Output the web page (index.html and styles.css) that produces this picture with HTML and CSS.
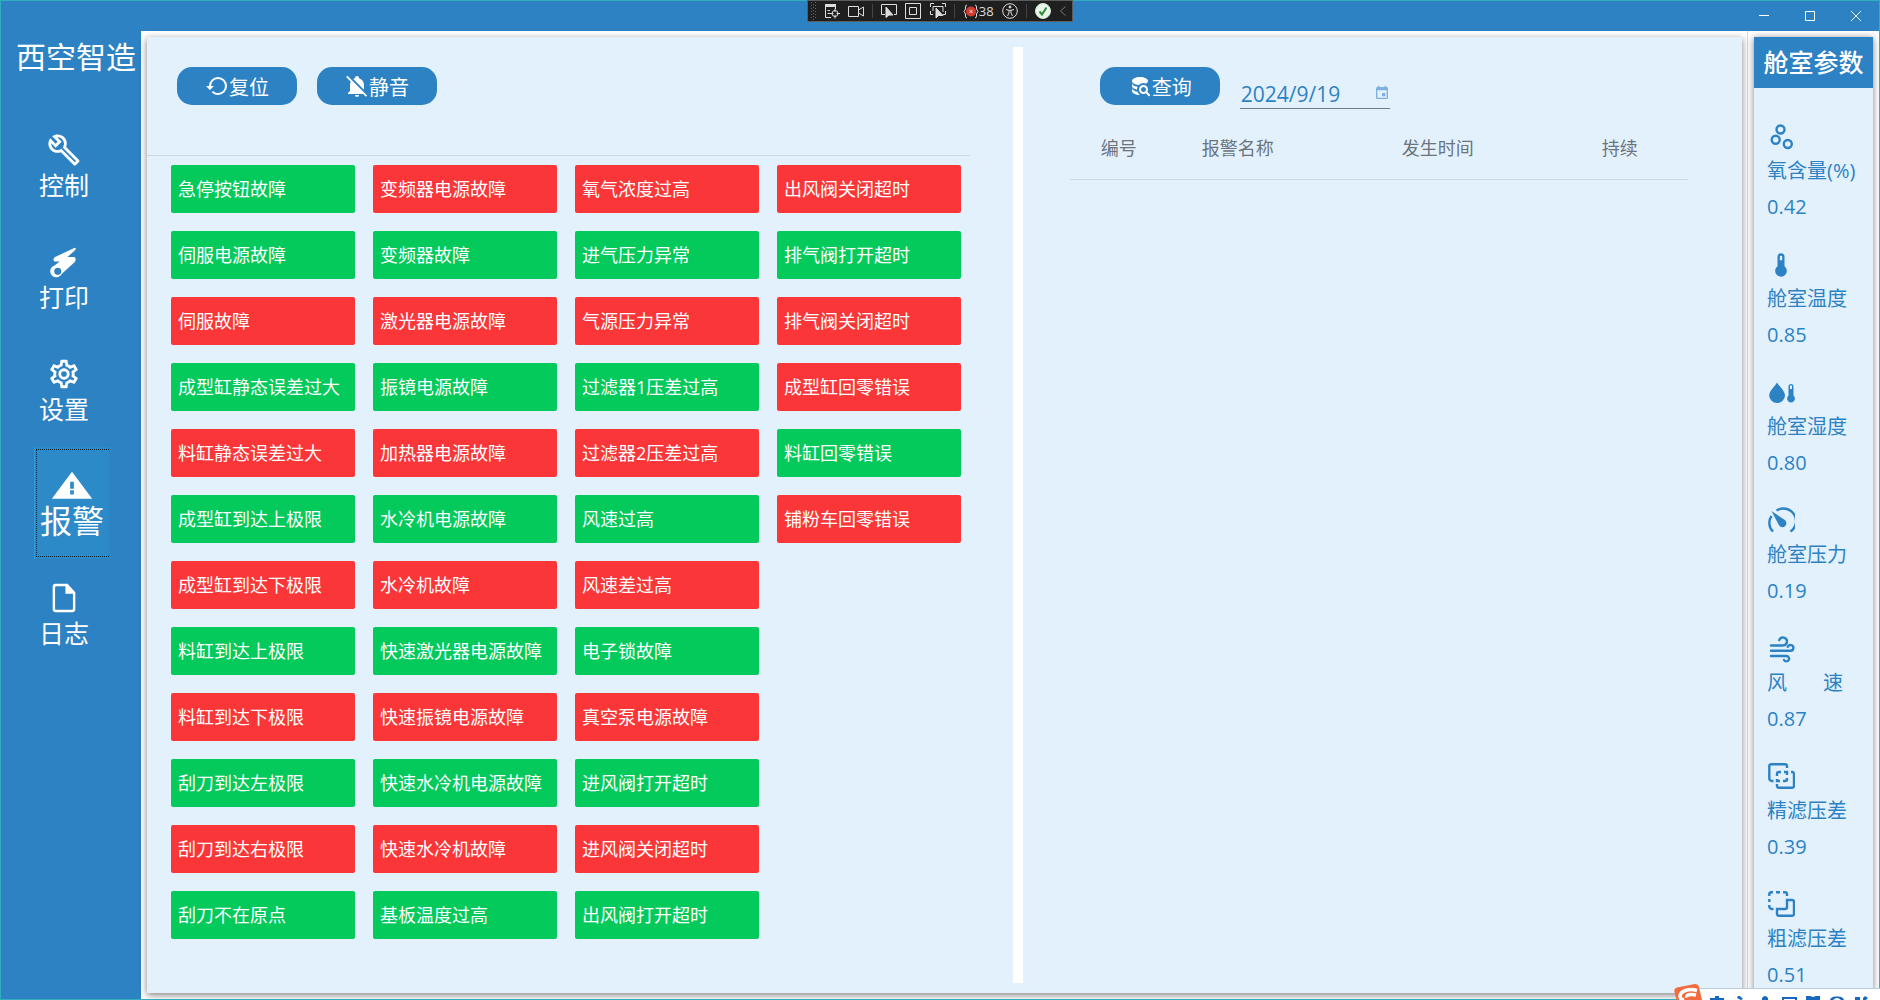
FILE: index.html
```html
<!DOCTYPE html>
<html lang="zh-CN">
<head>
<meta charset="utf-8">
<title>西空智造</title>
<link rel="stylesheet" href="styles.css">
</head>
<body>
<div class="window">
  <header class="titlebar">
    <div class="caption-buttons">
      <button type="button" aria-label="最小化"><svg width="12" height="12" viewBox="0 0 12 12"><path d="M1 5.500h10"/></svg></button>
      <button type="button" aria-label="最大化"><svg width="12" height="12" viewBox="0 0 12 12"><path d="M1.500 1.500h9v9h-9z"/></svg></button>
      <button type="button" aria-label="关闭"><svg width="12" height="12" viewBox="0 0 12 12"><path d="M1 1l10 10M11 1L1 11"/></svg></button>
    </div>
  </header>

  <div class="body">
    <aside class="sidebar">
      <h1 class="brand">西空智造</h1>
      <nav class="nav">
        <button type="button" class="nav-item">
          <svg class="nav-icon" viewBox="0 0 24 24"><path d="M22.61,19L13.53,9.91C14.46,7.57 14,4.81 12.09,2.91C9.79,0.61 6.21,0.4 3.66,2.26L7.5,6.11L6.08,7.52L2.25,3.69C0.39,6.23 0.6,9.82 2.9,12.11C4.76,13.97 7.47,14.46 9.79,13.59L18.9,22.7C19.29,23.09 19.92,23.09 20.31,22.7L22.61,20.4C23,20 23,19.39 22.61,19M19.61,20.59L10.15,11.13C9.54,11.58 8.86,11.85 8.15,11.95C6.79,12.15 5.36,11.74 4.32,10.7C3.37,9.76 2.93,8.5 3,7.26L6.09,10.35L10.33,6.11L7.24,3C8.5,2.95 9.73,3.39 10.68,4.33C11.76,5.41 12.17,6.9 11.92,8.29C11.8,9 11.5,9.66 11.04,10.25L20.5,19.7L19.61,20.59Z"/></svg>
          <span>控制</span>
        </button>
        <button type="button" class="nav-item">
          <svg class="nav-icon" viewBox="0 0 24 24"><path fill-rule="evenodd" d="M19.200 2.100Q20.600 1.700 20.100 3.300L14.500 8.500H19.300Q20.800 9 19.800 11.800L10.500 20.300A4.300 4.300 0 1 1 5.300 14.400L9 11.700H5.300Q3.900 10.800 5.300 8.700ZM7.600 16.100A2.500 2.500 0 1 0 7.600 21.100A2.500 2.500 0 1 0 7.600 16.100Z"/></svg>
          <span>打印</span>
        </button>
        <button type="button" class="nav-item">
          <svg class="nav-icon" viewBox="0 0 24 24"><path d="M12,8A4,4 0 0,1 16,12A4,4 0 0,1 12,16A4,4 0 0,1 8,12A4,4 0 0,1 12,8M12,10A2,2 0 0,0 10,12A2,2 0 0,0 12,14A2,2 0 0,0 14,12A2,2 0 0,0 12,10M10,22C9.75,22 9.54,21.82 9.5,21.58L9.13,18.93C8.5,18.68 7.96,18.34 7.44,17.94L4.95,18.95C4.73,19.03 4.46,18.95 4.34,18.73L2.34,15.27C2.21,15.05 2.27,14.78 2.46,14.63L4.57,12.97L4.5,12L4.57,11L2.46,9.37C2.27,9.22 2.21,8.95 2.34,8.73L4.34,5.27C4.46,5.05 4.73,4.96 4.95,5.05L7.44,6.05C7.96,5.66 8.5,5.32 9.13,5.07L9.5,2.42C9.54,2.18 9.75,2 10,2H14C14.25,2 14.46,2.18 14.5,2.42L14.87,5.07C15.5,5.32 16.04,5.66 16.56,6.05L19.05,5.05C19.27,4.96 19.54,5.05 19.66,5.27L21.66,8.73C21.79,8.95 21.73,9.22 21.54,9.37L19.43,11L19.5,12L19.43,13L21.54,14.63C21.73,14.78 21.79,15.05 21.66,15.27L19.66,18.73C19.54,18.95 19.27,19.04 19.05,18.95L16.56,17.95C16.04,18.34 15.5,18.68 14.87,18.93L14.5,21.58C14.46,21.82 14.25,22 14,22H10M11.25,4L10.88,6.61C9.68,6.86 8.62,7.5 7.85,8.39L5.44,7.35L4.69,8.65L6.8,10.2C6.4,11.37 6.4,12.64 6.8,13.8L4.68,15.36L5.43,16.66L7.86,15.62C8.63,16.5 9.68,17.14 10.87,17.38L11.24,20H12.76L13.13,17.39C14.32,17.14 15.37,16.5 16.14,15.62L18.57,16.66L19.32,15.36L17.2,13.81C17.6,12.64 17.6,11.37 17.2,10.2L19.31,8.65L18.56,7.35L16.15,8.39C15.38,7.5 14.32,6.86 13.12,6.62L12.75,4H11.25Z"/></svg>
          <span>设置</span>
        </button>
        <button type="button" class="nav-item nav-item-active" aria-current="page">
          <svg class="nav-icon nav-icon-wide" viewBox="0 0 24 24" preserveAspectRatio="none"><path d="M13 14H11V9H13M13 18H11V15H13M1 21H23L12 2L1 21Z"/></svg>
          <span>报警</span>
        </button>
        <button type="button" class="nav-item">
          <svg class="nav-icon" viewBox="0 0 24 24"><path fill-rule="evenodd" d="M6 2H14.500L20 8V20A2 2 0 0 1 18 22H6A2 2 0 0 1 4 20V4A2 2 0 0 1 6 2ZM6.500 3.700A.8.800 0 0 0 5.700 4.500V19.500A.8.800 0 0 0 6.500 20.300H17.500A.8.800 0 0 0 18.300 19.500V9H13V3.700Z"/></svg>
          <span>日志</span>
        </button>
      </nav>
    </aside>

    <main class="content">
      <div class="card">
        <section class="pane alarms">
          <div class="toolbar">
            <button type="button" class="btn"><svg viewBox="0 0 24 24"><path d="M13,3A9,9 0 0,0 4,12H1L4.89,15.89L4.96,16.03L9,12H6A7,7 0 0,1 13,5A7,7 0 0,1 20,12A7,7 0 0,1 13,19C11.07,19 9.32,18.21 8.06,16.94L6.64,18.36C8.27,20 10.5,21 13,21A9,9 0 0,0 22,12A9,9 0 0,0 13,3Z"/></svg>复位</button>
            <button type="button" class="btn"><svg viewBox="0 0 24 24"><path d="M20.84,22.73L18.11,20H3V19L5,17V11C5,9.86 5.29,8.73 5.83,7.72L1.11,3L2.39,1.73L22.11,21.46L20.84,22.73M19,15.8V11C19,7.9 16.97,5.17 14,4.29C14,4.19 14,4.1 14,4A2,2 0 0,0 12,2A2,2 0 0,0 10,4C10,4.1 10,4.19 10,4.29C9.39,4.47 8.8,4.74 8.26,5.09L19,15.8M12,23A2,2 0 0,0 14,21H10A2,2 0 0,0 12,23Z"/></svg>静音</button>
          </div>
          <ul class="tiles">
            <li class="tile ok">急停按钮故障</li>
            <li class="tile ok">伺服电源故障</li>
            <li class="tile fault">伺服故障</li>
            <li class="tile ok">成型缸静态误差过大</li>
            <li class="tile fault">料缸静态误差过大</li>
            <li class="tile ok">成型缸到达上极限</li>
            <li class="tile fault">成型缸到达下极限</li>
            <li class="tile ok">料缸到达上极限</li>
            <li class="tile fault">料缸到达下极限</li>
            <li class="tile ok">刮刀到达左极限</li>
            <li class="tile fault">刮刀到达右极限</li>
            <li class="tile ok">刮刀不在原点</li>
            <li class="tile fault">变频器电源故障</li>
            <li class="tile ok">变频器故障</li>
            <li class="tile fault">激光器电源故障</li>
            <li class="tile ok">振镜电源故障</li>
            <li class="tile fault">加热器电源故障</li>
            <li class="tile ok">水冷机电源故障</li>
            <li class="tile fault">水冷机故障</li>
            <li class="tile ok">快速激光器电源故障</li>
            <li class="tile fault">快速振镜电源故障</li>
            <li class="tile ok">快速水冷机电源故障</li>
            <li class="tile fault">快速水冷机故障</li>
            <li class="tile ok">基板温度过高</li>
            <li class="tile fault">氧气浓度过高</li>
            <li class="tile ok">进气压力异常</li>
            <li class="tile fault">气源压力异常</li>
            <li class="tile ok">过滤器1压差过高</li>
            <li class="tile fault">过滤器2压差过高</li>
            <li class="tile ok">风速过高</li>
            <li class="tile fault">风速差过高</li>
            <li class="tile ok">电子锁故障</li>
            <li class="tile fault">真空泵电源故障</li>
            <li class="tile ok">进风阀打开超时</li>
            <li class="tile fault">进风阀关闭超时</li>
            <li class="tile ok">出风阀打开超时</li>
            <li class="tile fault">出风阀关闭超时</li>
            <li class="tile ok">排气阀打开超时</li>
            <li class="tile fault">排气阀关闭超时</li>
            <li class="tile fault">成型缸回零错误</li>
            <li class="tile ok">料缸回零错误</li>
            <li class="tile fault">铺粉车回零错误</li>
          </ul>
        </section>

        <div class="splitter"></div>

        <section class="pane history">
          <div class="query">
            <button type="button" class="btn"><svg viewBox="0 0 24 24"><path d="M18.68,12.32C16.92,10.56 14.07,10.57 12.32,12.33C10.56,14.09 10.56,16.94 12.32,18.69C13.81,20.17 16.11,20.43 17.89,19.32L21,22.39L22.39,21L19.3,17.89C20.43,16.12 20.17,13.8 18.68,12.32M17.27,17.27C16.29,18.25 14.71,18.24 13.73,17.27C12.76,16.29 12.76,14.71 13.74,13.73C14.71,12.76 16.29,12.76 17.27,13.73C18.24,14.71 18.24,16.29 17.27,17.27M10.9,20.1C10.25,19.44 9.74,18.65 9.42,17.78C6.27,17.25 4,15.76 4,14V17C4,19.21 7.58,21 12,21V21C11.6,20.74 11.23,20.44 10.9,20.1M4,9V12C4,13.68 6.07,15.12 9,15.7C9,15.63 9,15.57 9,15.5C9,14.57 9.2,13.65 9.58,12.81C6.34,12.3 4,10.79 4,9M12,3C7.58,3 4,4.79 4,7C4,9 7,10.68 10.85,11H10.9C12.1,9.74 13.76,9 15.5,9C16.41,9 17.31,9.19 18.14,9.56C19.17,9.09 19.87,8.12 20,7C20,4.79 16.42,3 12,3Z"/></svg>查询</button>
            <div class="date">
              <input type="text" value="2024/9/19" aria-label="日期">
              <button type="button" aria-label="选择日期"><svg width="16" height="16" viewBox="0 0 24 24"><path d="M19 19H5V8H19M16 1V3H8V1H6V3H5A2 2 0 0 0 3 5V19A2 2 0 0 0 5 21H19A2 2 0 0 0 21 19V5A2 2 0 0 0 19 3H18V1M17 12H12V17H17V12Z"/></svg></button>
            </div>
          </div>
          <table class="records">
            <colgroup><col class="col-id"><col class="col-name"><col class="col-time"><col></colgroup>
            <thead><tr><th scope="col">编号</th><th scope="col">报警名称</th><th scope="col">发生时间</th><th scope="col">持续</th></tr></thead>
            <tbody></tbody>
          </table>
        </section>
      </div>
    </main>

    <aside class="params">
      <div class="params-card">
        <h2>舱室参数</h2>
        <dl>
          <div class="param">
            <svg viewBox="0 0 28 28" class="line"><circle cx="13.500" cy="6.500" r="4"/><circle cx="8.700" cy="16.700" r="4"/><circle cx="20.800" cy="21" r="4"/></svg>
            <dt>氧含量(%)</dt><dd>0.42</dd>
          </div>
          <div class="param">
            <svg viewBox="0 0 24 24"><path d="M15 13V5A3 3 0 0 0 9 5V13A5 5 0 1 0 15 13M12 4A1 1 0 0 1 13 5V8H11V5A1 1 0 0 1 12 4Z"/></svg>
            <dt>舱室温度</dt><dd>0.85</dd>
          </div>
          <div class="param">
            <svg viewBox="0 0 28 28"><path d="M10 3.500C12 7 18 12 18 16.500A7.900 7.500 0 0 1 2.200 16.500C2.200 12 8 7 10 3.500Z"/><path fill-rule="evenodd" d="M26.500 16.500V7.500A2.500 2.500 0 0 0 21.500 7.500V16.500A3.900 3.900 0 1 0 26.500 16.500ZM24 6.200A1 1 0 0 1 25 7.200V10H23V7.200A1 1 0 0 1 24 6.200Z"/></svg>
            <dt>舱室湿度</dt><dd>0.80</dd>
          </div>
          <div class="param">
            <svg viewBox="0 0 28 28"><path d="M9.500 3.600A12 12 0 0 1 23.500 24.500M6 24.500A12 12 0 0 1 4.500 9" fill="none" stroke="currentColor" stroke-width="2.400"/><path d="M4.500 4L17.500 12.800A4 4 0 1 1 11.800 18Z"/></svg>
            <dt>舱室压力</dt><dd>0.19</dd>
          </div>
          <div class="param">
            <svg viewBox="0 1 28 28" class="line"><path d="M4 11.500H16A4 4 0 1 0 12.200 6.200M4 16.800H23.500A2.900 2.900 0 1 0 20.800 12.800M4 22H19.500A2.700 2.700 0 1 1 17 26" stroke-linecap="round"/></svg>
            <dt>风<span class="spread"></span>速</dt><dd>0.87</dd>
          </div>
          <div class="param">
            <svg viewBox="0 1 28 28" class="line"><path d="M6.500 19H4.500A2.500 2.500 0 0 1 2.300 17V4A2 2 0 0 1 4.300 2.200H18A2 2 0 0 1 20 4V6M24 10H25.500A2 2 0 0 1 27 12V24A2 2 0 0 1 25 25.800H12A2 2 0 0 1 10 24V22"/><path d="M14 10H12A2 2 0 0 0 10 12V14M17 10H20V13M20 16V17A2 2 0 0 1 18 19H16M13 19H10V17"/></svg>
            <dt>精滤压差</dt><dd>0.39</dd>
          </div>
          <div class="param">
            <svg viewBox="0 1 28 28" class="line"><path d="M6.500 19H4.500A2.500 2.500 0 0 1 2.300 17V15M2.300 12V9M2.300 6V4A2 2 0 0 1 4.300 2.200H6M9 2.200H13M16 2.200H18A2 2 0 0 1 20 4V6M20 10H25A2 2 0 0 1 27 12V24A2 2 0 0 1 25 25.800H12A2 2 0 0 1 10 24V19H18A2 2 0 0 0 20 17Z"/></svg>
            <dt>粗滤压差</dt><dd>0.51</dd>
          </div>
        </dl>
      </div>
    </aside>
  </div>
</div>

<div class="debugbar">
  <svg width="5" height="18" viewBox="0 0 5 18" class="grip"><path d="M.5 0V18M4.500 0V18M2.500 2V18"/></svg>
  <svg width="16" height="16" viewBox="0 0 16 16"><path d="M7 14.500H1.500V4M11.500 4V6M3.500 7.500H6M3.500 10.500H6"/><path d="M1 2.500H12" stroke-width="3"/><circle cx="11" cy="10.500" r="3"/><path d="M11 5.500V9M11 12V15.500M6 10.500H9.500M12.500 10.500H16"/></svg>
  <svg width="16" height="16" viewBox="0 0 16 16"><path d="M.5 3.500H10.500V13.500H.5ZM10.500 7L15.500 4V13L10.500 10"/></svg>
  <i></i>
  <svg width="16" height="16" viewBox="0 0 16 16"><path d="M4 11.500H.5V1.500H15.500V11.500H13"/><path d="M5 4V14.500L8 12L12 12Z" fill="#ddd"/></svg>
  <svg width="16" height="16" viewBox="0 0 16 16"><path d="M.5 .5H15.500V15.500H.5ZM4.500 4.500H11.500V11.500H4.500Z"/></svg>
  <svg width="16" height="16" viewBox="0 0 16 16"><path d="M.5 4V.5H4M12 .5H15.500V4M.5 8V11.500H3M15.500 8V11.500H13M3 3.500H13V9M3 3.500V8"/><path d="M6 5V15L8.500 12.500L13 12.500Z" fill="#ddd"/></svg>
  <i></i>
  <span class="hot"><svg width="16" height="16" viewBox="0 0 16 16"><circle cx="8" cy="8.500" r="5" fill="#d93a2f" stroke="none"/><path d="M4 2Q2.500 2 2.500 4V6L1 8.500L2.500 11V13Q2.500 15 4 15M12 2Q13.500 2 13.500 4V6L15 8.500L13.500 11V13Q13.500 15 12 15M6.500 7L9.500 10M9.500 7L6.500 10"/></svg>38</span>
  <svg width="16" height="16" viewBox="0 0 16 16"><circle cx="8" cy="8" r="7.300"/><circle cx="8" cy="4" r="1" fill="#ddd"/><path d="M4 6.500L7 7.300H9L12 6.500M7 7.300V10L5.500 13M9 7.300V10L10.500 13"/></svg>
  <i></i>
  <svg width="16" height="16" viewBox="0 0 16 16"><circle cx="8" cy="8" r="7.500" fill="#eaf5ea" stroke="#cfe8cf"/><path d="M4.500 8.500L7 11.500L11.500 4.500" stroke="#2e8b3a" stroke-width="2"/></svg>
  <svg width="8" height="16" viewBox="0 0 8 16"><path d="M6.500 3.500L1.500 8L6.500 12.500" stroke="#777"/></svg>
</div>

<div class="ime">
  <svg class="ime-logo" width="32" height="16" viewBox="0 0 32 16"><path d="M3.500 8Q2.500 4.500 6 3.500L24 0Q27 0 28 3L31 16H5.500Z" fill="#f26a3d"/><path d="M26 6.500C18 4 9 7 9 12.500C9 15 11 15.500 13 16M25 11C19 9.500 15 11 16 13.500" fill="none" stroke="#fff" stroke-width="3.500"/></svg>
  <svg class="ime-tools" width="170" height="4" viewBox="0 0 170 4"><path d="M0 2H5V0H9V2H14V4H0ZM28 0H30L33 3L31 4L27 2ZM52 4V2Q55-2 58 2V4ZM72 4V1H87V4H85V3H74V4ZM96 4V0H100L103 1L106 0H110V4ZM120 4Q121 0 127 .500Q133 0 134 4H131Q127 0 123 4ZM145 1H150V4H145ZM153 2L155 0L158 2L156 4H153Z"/></svg>
</div>
</body>
</html>
```
FILE: styles.css
```css
:root {
  --blue: #2d82c4;
  --pale: #e3f1fd;
  --line: #cbdae7;
  --green: #03ca5b;
  --red: #fb3639;
}

* { box-sizing: border-box; }

body {
  margin: 0;
  font-family: "Open Sans", "Noto Sans CJK SC", sans-serif;
  font-size: 18px;
  color: var(--blue);
  background: #fff;
}

button {
  border: 0;
  padding: 0;
  background: none;
  font: inherit;
  color: inherit;
}

svg { display: block; fill: currentColor; flex: none; }
h1, h2, dl, dd, ul { margin: 0; padding: 0; font-weight: 400; }

.window {
  height: 100vh;
  display: flex;
  flex-direction: column;
  overflow: hidden;
  border: 1px solid #30aebf;
}

.titlebar {
  flex: 0 0 30px;
  display: flex;
  justify-content: flex-end;
  background: var(--blue);
}

.caption-buttons { display: flex; }
.caption-buttons button {
  width: 46px;
  display: grid;
  place-items: center;
}
.caption-buttons svg { fill: none; stroke: #fff; }

.body { flex: 1; min-height: 0; display: flex; }

.sidebar {
  flex: 0 0 140px;
  background: var(--blue);
  color: #fff;
}

.brand {
  padding: 4px 0 0 15px;
  font-size: 30px;
  line-height: 44px;
  white-space: nowrap;
}

.nav {
  padding: 32px 0 0 33px;
  display: flex;
  flex-direction: column;
  align-items: flex-start;
}

.nav-item {
  padding: 22px 5px 20px;
  display: flex;
  flex-direction: column;
  align-items: center;
  font-size: 25px;
  line-height: 36px;
}
.nav-icon { width: 34px; height: 34px; }
.nav-icon-wide { width: 44px; }

.nav-item-active {
  position: relative;
  background: #2d8ac9;
  border-left: 1px solid #2c98d4;
  font-size: 32px;
}
/* keyboard focus marks, open on the right side */
.nav-item-active::after {
  content: "";
  position: absolute;
  inset: 2px 0 2px 1px;
  border: 1px dotted #0c2436;
  border-right: 0;
}

.content { flex: 1; min-width: 0; padding: 6px 5px 6px 6px; border-right: 1px solid #dcdcdc; }

.card {
  height: 100%;
  display: grid;
  grid-template-columns: 65fr 10px 54fr;
  background: var(--pale);
  box-shadow: 0 2px 7px rgba(0, 0, 0, .5);
}

.pane { min-width: 0; }
.splitter { margin: 10px 0; background: #fff; }

.toolbar {
  height: 119px;
  margin-right: 43px;
  padding: 30px;
  display: flex;
  gap: 20px;
  border-bottom: 1px solid var(--line);
}

.btn {
  width: 120px;
  height: 38px;
  display: flex;
  align-items: center;
  justify-content: center;
  border-radius: 15px;
  background: var(--blue);
  color: #fff;
  font-size: 20px;
}
.btn svg { width: 24px; height: 24px; }

.tiles {
  padding: 9px 24px;
  display: grid;
  grid-template-rows: repeat(12, 48px);
  grid-auto-flow: column;
  grid-auto-columns: 184px;
  gap: 18px;
  list-style: none;
}

.tile {
  padding-left: 7px;
  border-radius: 2px;
  line-height: 48px;
  color: #fff;
  white-space: nowrap;
}
.ok { background: var(--green); }
.fault { background: var(--red); }

.query { padding: 30px 0 0 77px; display: flex; gap: 20px; }

.date {
  width: 150px;
  height: 42px;
  display: flex;
  align-items: flex-end;
  border-bottom: 1px solid #6f7b86;
}
.date input {
  flex: 1;
  min-width: 0;
  height: 28px;
  padding: 0 0 0 1px;
  border: 0;
  background: none;
  font: inherit;
  font-size: 21px;
  color: inherit;
}
.date button { padding-bottom: 7px; color: #7db1e0; }

.records {
  width: calc(100% - 101px);
  margin: 7px 0 0 47px;
  table-layout: fixed;
  border-collapse: collapse;
  color: #6c757d;
}
.records th {
  height: 63px;
  padding: 0 0 1px;
  border-bottom: 1px solid var(--line);
  font-weight: 400;
  text-align: left;
}
.records th:first-child { padding-left: 31px; }
.col-id { width: 132px; }
.col-name, .col-time { width: 200px; }

.params { flex: 0 0 131px; padding: 6px 6px 0; }

.params-card {
  height: 100%;
  background: var(--pale);
  box-shadow: 0 1px 7px rgba(0, 0, 0, .5);
}
.params-card h2 {
  height: 51px;
  background: var(--blue);
  color: #fff;
  font-size: 25px;
  font-weight: 500;
  line-height: 51px;
  text-align: center;
}
.params-card dl { padding: 35px 0 0 13px; }

.param { height: 128px; font-size: 20px; white-space: nowrap; }
.param svg { width: 28px; height: 28px; }
.param .line { fill: none; stroke: currentColor; stroke-width: 2.4; }
.param dt { line-height: 40px; }
.param dd { line-height: 32px; }
.spread { display: inline-block; width: 36px; }

.debugbar {
  position: absolute;
  top: 0;
  left: 50%;
  width: 266px;
  height: 22px;
  margin-left: -133px;
  padding: 0 5px 0 3px;
  display: flex;
  align-items: center;
  justify-content: space-between;
  background: #1f1f1f;
  border: 1px solid #5c5c5c;
  color: #ddd;
  font-size: 13px;
}
.debugbar svg { fill: none; stroke: #ddd; }
.debugbar .grip { stroke: #666; stroke-dasharray: 1 2; }
.debugbar i { width: 1px; height: 14px; background: #444; }
.hot { display: flex; align-items: center; }

.ime {
  position: absolute;
  right: 0;
  bottom: 0;
  width: 209px;
  height: 16px;
  display: flex;
  align-items: flex-end;
  gap: 7px;
  background: linear-gradient(#b9cfe0, #b9cfe0) 24px 4px / 100% 1px no-repeat, linear-gradient(#fff, #fff) 24px 5px / 100% 11px no-repeat;
}
.ime-tools { color: #1769c0; }
```
